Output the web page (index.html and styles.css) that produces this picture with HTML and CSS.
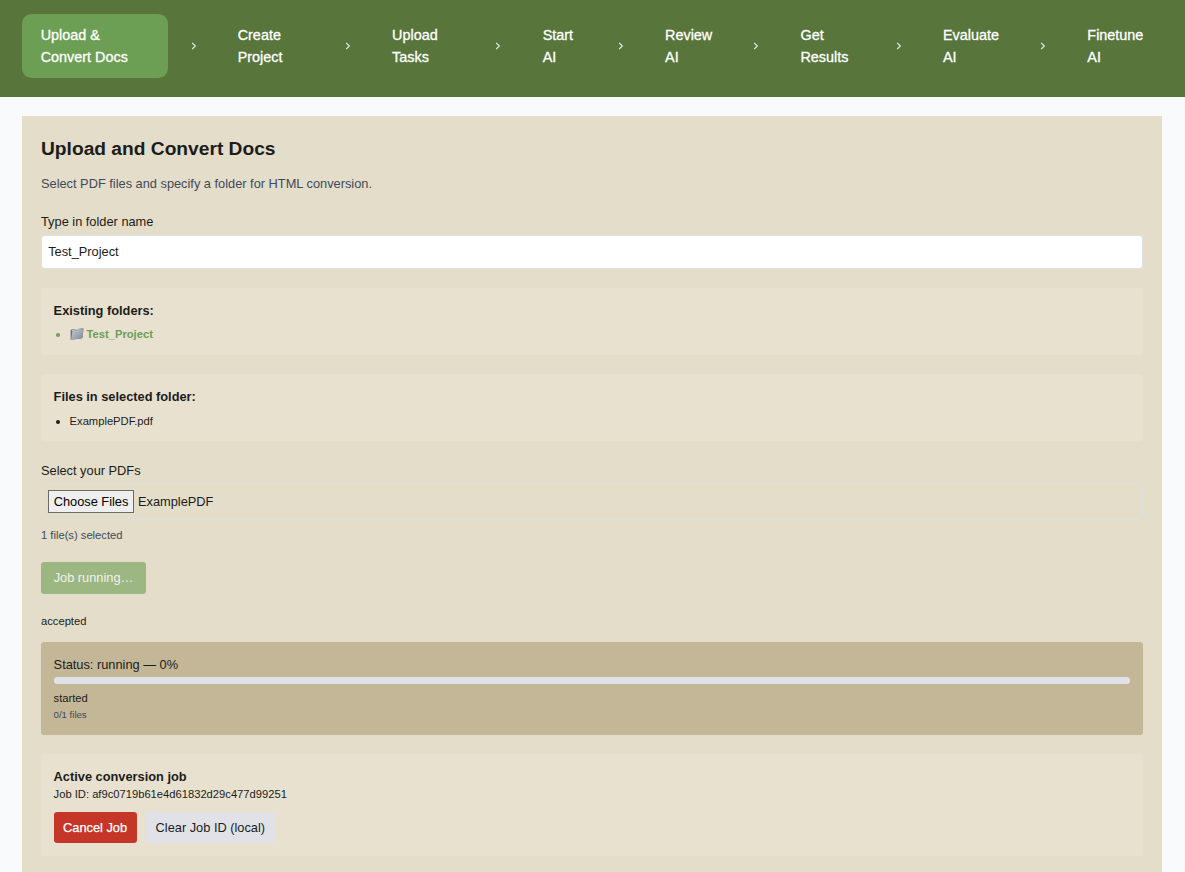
FILE: index.html
```
<!DOCTYPE html>
<html lang="en">
<head>
<meta charset="utf-8">
<title>Upload and Convert Docs</title>
<link rel="stylesheet" href="styles.css">
</head>
<body>
<nav class="steps">
  <a class="step active w1">Upload &amp;<br>Convert Docs</a>
  <span class="sep"><svg class="chevron" viewBox="0 0 6 8"><path d="M1.2 1 4.4 4 1.2 7"/></svg></span>
  <a class="step w2">Create<br>Project</a>
  <span class="sep"><svg class="chevron" viewBox="0 0 6 8"><path d="M1.2 1 4.4 4 1.2 7"/></svg></span>
  <a class="step w3">Upload<br>Tasks</a>
  <span class="sep"><svg class="chevron" viewBox="0 0 6 8"><path d="M1.2 1 4.4 4 1.2 7"/></svg></span>
  <a class="step w4">Start<br>AI</a>
  <span class="sep"><svg class="chevron" viewBox="0 0 6 8"><path d="M1.2 1 4.4 4 1.2 7"/></svg></span>
  <a class="step w5">Review<br>AI</a>
  <span class="sep"><svg class="chevron" viewBox="0 0 6 8"><path d="M1.2 1 4.4 4 1.2 7"/></svg></span>
  <a class="step w6">Get<br>Results</a>
  <span class="sep"><svg class="chevron" viewBox="0 0 6 8"><path d="M1.2 1 4.4 4 1.2 7"/></svg></span>
  <a class="step w7">Evaluate<br>AI</a>
  <span class="sep"><svg class="chevron" viewBox="0 0 6 8"><path d="M1.2 1 4.4 4 1.2 7"/></svg></span>
  <a class="step w8">Finetune<br>AI</a>
</nav>
<main class="card">
  <h2 class="title">Upload and Convert Docs</h2>
  <p class="intro">Select PDF files and specify a folder for HTML conversion.</p>
  <label class="label" for="folder">Type in folder name</label>
  <input class="input" id="folder" type="text" value="Test_Project">
  <section class="panel list-panel">
    <h3 class="panel-title">Existing folders:</h3>
    <ul class="list">
      <li class="item folder"><svg class="folder-icon" viewBox="0 0 14 14">
        <defs><linearGradient id="fold" x1="0" y1="0" x2="1" y2="1"><stop offset="0" stop-color="#c9ced5"/><stop offset="1" stop-color="#7d8591"/></linearGradient></defs>
        <path d="M.6 12.8V3.4l.8-1 3-.5.8.5 7.4-1.5.9.6-.9 9.2-1.2.8z" fill="#687180"/>
        <path d="M2 2.9 12.6 1.4l.3.7L2.2 4z" fill="#dfe1e3"/>
        <path d="M2.4 4.2 13.6 2.1 12.1 11 1.1 13z" fill="url(#fold)"/>
      </svg>Test_Project</li>
    </ul>
  </section>
  <section class="panel list-panel">
    <h3 class="panel-title">Files in selected folder:</h3>
    <ul class="list files"><li class="item">ExamplePDF.pdf</li></ul>
  </section>
  <div class="label">Select your PDFs</div>
  <div class="file-field"><button class="choose">Choose Files</button><span>ExamplePDF</span></div>
  <p class="selected">1 file(s) selected</p>
  <button class="button run">Job running…</button>
  <p class="message">accepted</p>
  <section class="status">
    <div class="status-line">Status: running — 0%</div>
    <div class="track"></div>
    <div class="stage">started</div>
    <div class="count">0/1 files</div>
  </section>
  <section class="panel job">
    <h3 class="panel-title">Active conversion job</h3>
    <div class="job-id">Job ID: af9c0719b61e4d61832d29c477d99251</div>
    <div class="actions">
      <button class="button cancel">Cancel Job</button>
      <button class="button clear">Clear Job ID (local)</button>
    </div>
  </section>
</main>
</body>
</html>
```
FILE: styles.css
```
* { box-sizing: border-box; }
body {
  margin: 0;
  background: #f8fafc;
  color: #1c1c1a;
  font: 12.8px/19px "Liberation Sans", Arial, sans-serif;
}
h2, h3, p, ul { margin: 0; padding: 0; }
button, input { font: inherit; color: inherit; }

.steps {
  display: flex;
  height: 97px;
  padding: 14px 22px 19px;
  background: #58763b;
  color: #fff;
}
.step {
  flex: none;
  height: 64px;
  padding: 10px 0 0 18.7px;
  border-radius: 9.6px;
  font-size: 14.4px;
  line-height: 22px;
  -webkit-text-stroke: .3px #fff;
}
.active { background: #6c9e54; }
.w1 { width: 146px; }
.w2 { width: 103.4px; }
.w3 { width: 99.6px; }
.w4 { width: 71.4px; }
.w5 { width: 84.4px; }
.w6 { width: 91.5px; }
.w7 { width: 93.4px; }
.w8 { width: 93px; }
.sep {
  display: flex;
  flex: none;
  align-items: center;
  justify-content: center;
  width: 51px;
  height: 64px;
}
.chevron {
  width: 6px;
  height: 8px;
  fill: none;
  stroke: #e3e9de;
  stroke-width: 1.1;
}

.card {
  margin: 19px 23px 0 22px;
  padding: 21px 19px 16px;
  background: #e3ddc9;
}
.title { font-size: 19.2px; line-height: 24px; }
.intro { margin-top: 13px; color: #414a5a; }
.label { display: block; margin-top: 19px; }
.input {
  display: block;
  width: 100%;
  height: 34px;
  margin-top: 4px;
  padding: 0 6.2px 2px;
  border: 1px solid #dbe0e5;
  border-radius: 3.2px;
  background: #fff;
}
.panel {
  margin-top: 19px;
  padding: 13px 12.6px;
  border-radius: 3.2px;
  background: #e8e1d0;
}
.list-panel { height: 67px; }
.panel-title { font-size: 12.8px; line-height: 19px; }
.list {
  margin-top: 6px;
  font-size: 11.2px;
  line-height: 17px;
  list-style: none;
}
.files { margin-top: 7px; }
.item { display: flex; align-items: center; }
.item::before {
  content: "";
  width: 4px;
  height: 4px;
  margin: 1px 9.6px 0 2.4px;
  border-radius: 50%;
  background: currentColor;
}
.folder { color: #6c9e54; font-weight: bold; }
.folder-icon { width: 14px; height: 14px; margin: 0 3px 1px 0; }
.panel + .label { margin-top: 20px; }
.file-field {
  display: flex;
  align-items: center;
  gap: 4px;
  height: 37px;
  margin-top: 3px;
  padding: 0 6px 1px;
  border: 1px solid #dce0e2;
  border-radius: 3.2px;
}
.choose {
  width: 86px;
  height: 23px;
  padding: 0;
  border: 1px solid #6b6b6b;
  border-radius: 0;
  background: #efefef;
  color: #000;
  white-space: nowrap;
}
.selected { margin-top: 7px; font-size: 11.2px; line-height: 17px; color: #414a5a; }
.button {
  display: block;
  height: 31px;
  padding: 0;
  border: 0;
  border-radius: 3.2px;
  white-space: nowrap;
}
.run {
  width: 105px;
  height: 32px;
  margin-top: 18px;
  padding-bottom: 2px;
  background: #9db783;
  color: #f3f2ea;
}
.message { margin-top: 19px; font-size: 11.2px; line-height: 17px; }
.status {
  height: 93px;
  margin-top: 12px;
  padding: 13px 12.6px;
  border-radius: 3.2px;
  background: #c3b797;
}
.track {
  height: 7px;
  margin-top: 3px;
  border-radius: 3.2px;
  background: #e1e2e8;
}
.stage { margin-top: 6px; font-size: 11.2px; line-height: 17px; }
.count { font-size: 9.6px; line-height: 15px; color: #414a5a; }
.job { height: 102px; }
.job-id { font-size: 11.2px; line-height: 17px; }
.actions { display: flex; gap: 9px; margin-top: 9px; }
.cancel { width: 83px; background: #c53528; color: #fff; -webkit-text-stroke: .25px #fff; }
.clear { width: 129.5px; background: #e1e2e8; }
```
